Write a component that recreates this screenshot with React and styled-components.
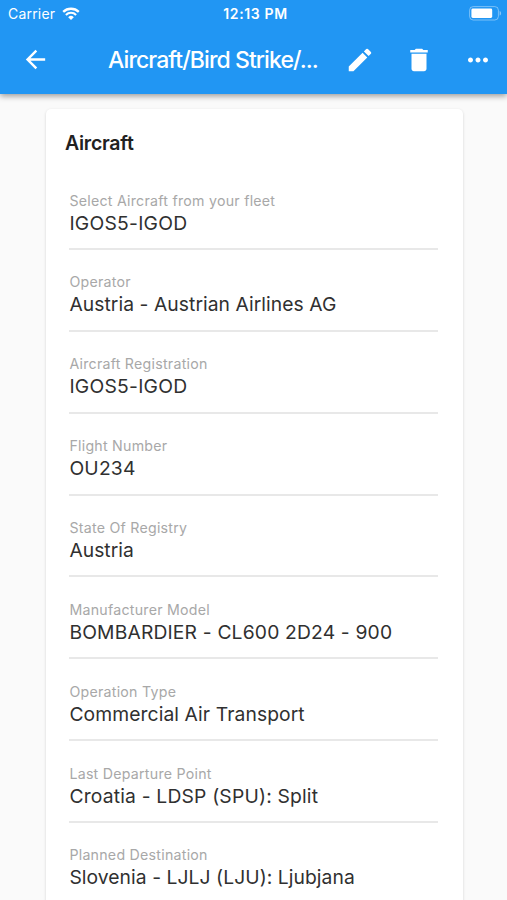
import React from 'react';
import styled, { createGlobalStyle } from 'styled-components';
import { MdArrowBack, MdDelete, MdEdit, MdMoreHoriz } from 'react-icons/md';

// spacing is the letter spacing of the value, in px
const fields = [
	{ label: 'Select Aircraft from your fleet', value: 'IGOS5-IGOD', spacing: 0.25 },
	{ label: 'Operator', value: 'Austria - Austrian Airlines AG', spacing: 0.06 },
	{ label: 'Aircraft Registration', value: 'IGOS5-IGOD', spacing: 0.25 },
	{ label: 'Flight Number', value: 'OU234', spacing: 0.2 },
	{ label: 'State Of Registry', value: 'Austria', spacing: 0.02 },
	{ label: 'Manufacturer Model', value: 'BOMBARDIER - CL600 2D24 - 900', spacing: 0.16 },
	{ label: 'Operation Type', value: 'Commercial Air Transport', spacing: 0.09 },
	{ label: 'Last Departure Point', value: 'Croatia - LDSP (SPU): Split', spacing: 0.18 },
	{ label: 'Planned Destination', value: 'Slovenia - LJLJ (LJU): Ljubjana', spacing: 0.06 },
];

const WifiIcon = () => (
	<svg width='18' height='14' viewBox='0 0 18 14' fill='none' stroke='white'>
		<path d='M1.2 4.9a11.2 11.2 0 0 1 15.6 0' strokeWidth='2.3' />
		<path d='M3.9 7.9a7.2 7.2 0 0 1 10.2 0' strokeWidth='2.1' />
		<path d='M6.2 10.2a4 4 0 0 1 5.6 0L9 13z' fill='white' stroke='none' />
	</svg>
);

const BatteryIcon = () => (
	<svg width='33' height='15' viewBox='0 0 33 15'>
		<rect x='0.6' y='0.6' width='28.8' height='13.4' rx='3.6' fill='none' stroke='white' strokeOpacity='0.4' />
		<rect x='2.4' y='2.6' width='20.8' height='9.4' rx='1.4' fill='white' />
		<path d='M30.6 5c2 .7 2 3.9 0 4.6z' fill='white' fillOpacity='0.45' />
	</svg>
);

const App = () => {
	return (
		<Screen>
			<GlobalStyle />
			<Header>
				<StatusBar>
					<Carrier>
						Carrier
						<WifiIcon />
					</Carrier>
					<Clock>12:13 PM</Clock>
					<Battery>
						<BatteryIcon />
					</Battery>
				</StatusBar>
				<Toolbar>
					<IconButton aria-label='Back'>
						<MdArrowBack size={29} />
					</IconButton>
					<Title>Aircraft/Bird Strike/...</Title>
					<IconButton aria-label='Edit'>
						<MdEdit size={30} />
					</IconButton>
					<IconButton aria-label='Delete'>
						<MdDelete size={30} />
					</IconButton>
					<IconButton aria-label='More'>
						<MdMoreHoriz size={30} />
					</IconButton>
				</Toolbar>
			</Header>
			<Card>
				<CardTitle>Aircraft</CardTitle>
				{fields.map(({ label, value, spacing }) => (
					<Field key={label}>
						<Label>{label}</Label>
						<Value $spacing={spacing}>{value}</Value>
					</Field>
				))}
			</Card>
		</Screen>
	);
};

const GlobalStyle = createGlobalStyle`
	* {
		box-sizing: border-box;
	}

	body {
		margin: 0;
		overflow: hidden;
		background-color: #fafafa;
		font-family: Inter, 'Liberation Sans', sans-serif;
	}
`;

const Screen = styled.div`
	display: flex;
	flex-direction: column;
	height: 900px;
	overflow: hidden;
	background-color: #fafafa;
`;

const Header = styled.header`
	flex: none;
	height: 94px;
	color: white;
	background-color: #2196f3;
	box-shadow: 0 2px 6px rgba(0, 0, 0, 0.4);
	z-index: 1;
`;

const StatusBar = styled.div`
	display: grid;
	grid-template-columns: 1fr auto 1fr;
	align-items: center;
	height: 27px;
	padding: 0 4px 0 8px;
	font-size: 14px;
`;

const Carrier = styled.div`
	display: flex;
	align-items: center;
	gap: 7px;
	letter-spacing: 0.2px;
`;

const Clock = styled.div`
	font-size: 14px;
	font-weight: 600;
	letter-spacing: 0.65px;
`;

const Battery = styled.div`
	display: flex;
	justify-content: flex-end;
	padding-right: 1px;
`;

const Toolbar = styled.div`
	display: flex;
	align-items: center;
	height: 65px;
	padding-left: 6px;
`;

const IconButton = styled.button`
	display: flex;
	flex: none;
	align-items: center;
	justify-content: center;
	width: 59px;
	height: 59px;
	padding: 0;
	border: none;
	color: inherit;
	background: none;
`;

const Title = styled.h1`
	flex: 1;
	margin: 0;
	padding-left: 43px;
	font-size: 23px;
	font-weight: 500;
	letter-spacing: -0.91px;
	white-space: nowrap;
`;

const Card = styled.main`
	flex: none;
	width: 417px;
	height: 900px;
	margin: 15px 0 0 46px;
	padding: 21px 24.6px 0 23.4px;
	border-radius: 5px;
	background-color: white;
	box-shadow: 0 1px 3px rgba(0, 0, 0, 0.16);
`;

const CardTitle = styled.h2`
	height: 54px;
	margin: 0 0 0 -4.4px;
	color: #212121;
	font-size: 19.5px;
	font-weight: 600;
	line-height: 26px;
	letter-spacing: -0.25px;
`;

const Field = styled.div`
	height: 81.87px;
	padding-top: 6.5px;
	background: linear-gradient(#e8e8e8, #e8e8e8) left 0 top 64px / 100% 2px no-repeat;
`;

const Label = styled.div`
	height: 19px;
	color: #a8a8a8;
	font-size: 14.2px;
	line-height: 20px;
	letter-spacing: 0.25px;
	white-space: nowrap;
`;

const Value = styled.div`
	color: #303030;
	font-size: 19.3px;
	line-height: 26px;
	letter-spacing: ${({ $spacing }) => $spacing}px;
	white-space: nowrap;
`;

export default App;
